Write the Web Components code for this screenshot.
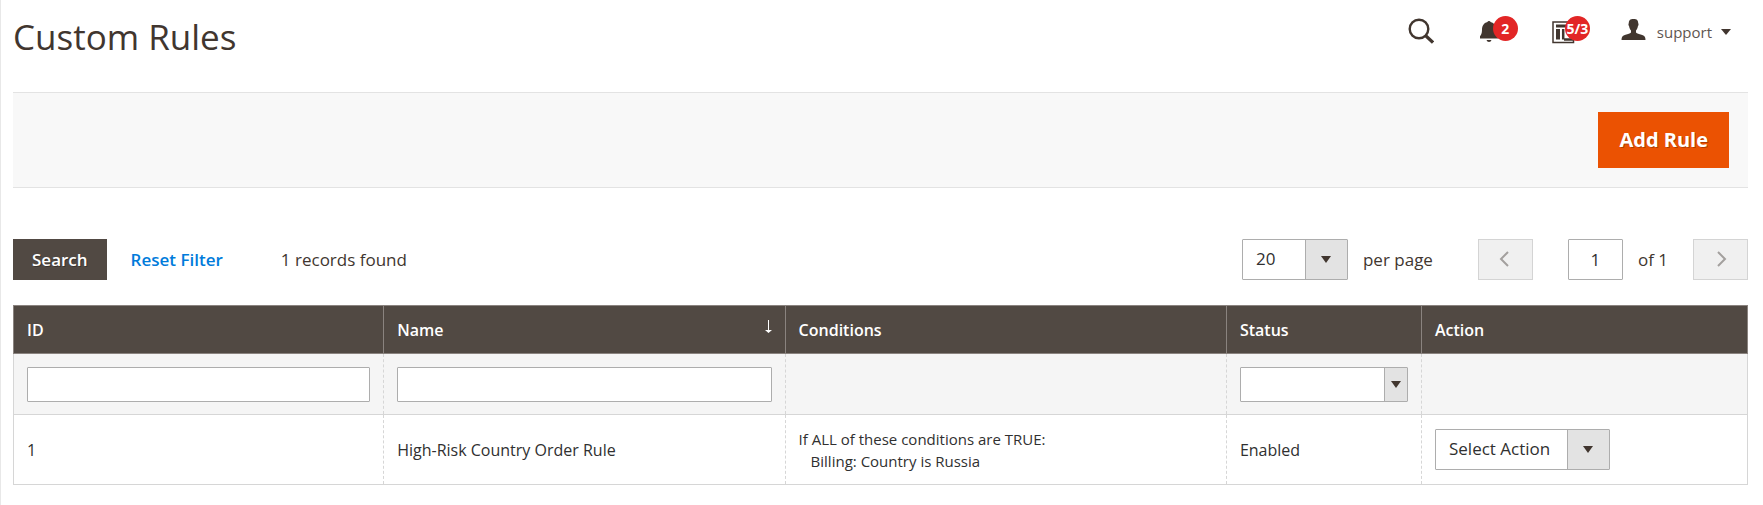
<!DOCTYPE html>
<html lang="en">
<head>
<meta charset="utf-8">
<title>Custom Rules</title>
<style>
  body { margin: 0; background: #fff; color: #41362f; font-family: "Open Sans", "Noto Sans", sans-serif; font-size: 16px; line-height: 22px; }
</style>
</head>
<body>
<rules-page></rules-page>

<script>
const define = (name, html, setup) => {
  const template = document.createElement('template');
  template.innerHTML = html;
  customElements.define(name, class extends HTMLElement {
    connectedCallback() {
      if (this.shadowRoot) return;
      this.attachShadow({ mode: 'open' }).append(template.content.cloneNode(true));
      if (setup) setup(this, this.shadowRoot);
    }
  });
};

/* Button: primary (orange), dark, link and pager looks */
define('ui-button', `
  <style>
    :host { display: block; }
    button { display: block; box-sizing: border-box; height: 41px; margin: 0; padding: 0 18px; border: 1px solid transparent; background: none; color: #007bdb; font: 600 17px/22px "Open Sans", sans-serif; cursor: pointer; white-space: nowrap; }
    :host([kind="primary"]) button { height: 56px; padding: 0 20px; border-color: #eb5202; background: #eb5202; color: #fff; font-size: 20px; font-weight: 700; text-shadow: 1px 1px 0 rgba(0,0,0,.25); }
    :host([kind="dark"]) button { border-color: #514943; background: #514943; color: #fff; text-shadow: 1px 1px 0 rgba(0,0,0,.3); }
    :host([kind="link"]) button { padding: 0 23px; }
    :host([kind="pager"]) button { width: 55px; padding: 0; border-color: #d4d4d4; background: #f0f0f0; color: #a3a09e; }
    ::slotted(svg) { display: block; margin: -2px auto 0; }
  </style>
  <button type="button"><slot></slot></button>`,
  (host, root) => {
    const button = root.querySelector('button');
    if (host.hasAttribute('label')) button.setAttribute('aria-label', host.getAttribute('label'));
    button.disabled = host.hasAttribute('disabled');
  });

/* Drop-down with a grey arrow box; slotted text is its visible label */
define('ui-select', `
  <style>
    :host { display: inline-block; vertical-align: middle; --height: 41px; --arrow: 42px; --width: 106px; }
    :host([kind="action"]) { --width: 175px; }
    :host([kind="filter"]) { --width: 100%; --height: 35px; --arrow: 23px; display: block; }
    label { display: flex; align-items: center; gap: 15px; }
    .box { display: grid; grid-template-columns: 1fr var(--arrow); box-sizing: border-box; width: var(--width); height: var(--height); border: 1px solid #adadad; border-radius: 1px; background: #fff; }
    select { grid-area: 1 / 1 / 2 / 3; appearance: none; width: 100%; height: 100%; margin: 0; padding: 0 0 1px 13px; border: 0; background: none; color: #303030; font: 17px/22px "Open Sans", sans-serif; }
    .arrow { grid-area: 1 / 2; display: flex; align-items: center; justify-content: center; box-sizing: border-box; border-left: 1px solid #adadad; background: #e3e3e3; pointer-events: none; }
  </style>
  <label>
    <span class="box"><span class="arrow"><svg width="10" height="7" viewBox="0 0 10 7"><path d="M0 0h10L5 7z" fill="#41362f"/></svg></span><select></select></span>
    <slot></slot>
  </label>`,
  (host, root) => {
    const select = root.querySelector('select');
    host.getAttribute('options').split('|').forEach(text => select.add(new Option(text)));
    if (host.hasAttribute('label')) select.setAttribute('aria-label', host.getAttribute('label'));
  });

/* Icon link with an optional red counter */
define('icon-action', `
  <style>
    :host { display: block; }
    a { display: block; position: relative; color: #41362f; text-decoration: none; }
    ::slotted(svg) { display: block; }
    .count { position: absolute; top: -2px; left: 13px; width: 25px; height: 25px; border-radius: 50%; background: #e22626; color: #fff; font: 700 14px/25px "Open Sans", sans-serif; text-align: center; }
    .count:empty { display: none; }
  </style>
  <a href="#"><slot></slot><span class="count"></span></a>`,
  (host, root) => {
    root.querySelector('a').setAttribute('aria-label', host.getAttribute('label'));
    root.querySelector('.count').textContent = host.getAttribute('count') || '';
  });

define('page-header', `
  <style>
    :host { display: flex; justify-content: space-between; align-items: flex-start; height: 92px; }
    h1 { margin: 0; padding-top: 13px; font-size: 35px; line-height: 48px; font-weight: 400; }
    nav { display: flex; padding: 18px 17px 0 0; }
    .user { display: flex; gap: 11px; color: #41362f; text-decoration: none; font-size: 15px; line-height: 26px; }
    .name { display: flex; align-items: center; gap: 9px; color: #5f5650; }
    icon-action { margin-right: 46px; }
    .news { margin-right: 43px; }
  </style>
  <h1>Custom Rules</h1>
  <nav aria-label="Account">
    <icon-action label="Search"><svg width="27" height="27" viewBox="0 0 27 27" fill="none" stroke="#41362f"><circle cx="12" cy="11" r="9.300" stroke-width="2.400"/><path d="M18.500 17.500l7.500 7" stroke-width="3.200"/></svg></icon-action>
    <icon-action label="Notifications" count="2"><svg width="26" height="26" viewBox="0 0 26 26" fill="#41362f"><path d="M7.500 4q0-1 1.500-1t1.500 1c4 1 5.500 4 5.500 8 0 4 2 5.500 2.500 7v1.500H-.5V19C.5 17.500 2 16 2 12c0-4 1.500-7 5.500-8zM6.500 22h5q-.5 2-2.500 2t-2.500-2z"/></svg></icon-action>
    <icon-action label="System news" count="5/3" class="news"><svg width="26" height="26" viewBox="0 0 26 26" fill="none" stroke="#41362f"><path d="M1 4h20.500v20.500H1z" stroke-width="1.500"/><path d="M4 8h16" stroke-width="3"/><path d="M6 11v10.500" stroke-width="4"/><path d="M11.200 11v10.500M12 21.500h9" stroke-width="2.500"/></svg></icon-action>
    <a class="user" href="#"><svg width="25" height="23" viewBox="0 0 25 23" fill="#41362f"><path d="M12.500 1c3.500 0 4.700 1.500 4.700 4.200.6.500.4 2-.3 3-.4 2-1 3.300-1.900 4.300v2c1 1.300 3 1.500 5.500 2.300 3 1 4 2.200 4 5.200H.5c0-3 1-4.200 4-5.200C7 16 9 15.800 10 14.500v-2C9.100 11.500 8.500 10.200 8.100 8.200c-.7-1-.9-2.500-.3-3C7.800 2.500 9 1 12.500 1z"/></svg><span class="name">support <svg width="10" height="6" viewBox="0 0 10 6"><path d="M0 0h10L5 6z" fill="#41362f"/></svg></span></a>
  </nav>`);

define('action-bar', `
  <style>
    :host { display: flex; justify-content: flex-end; padding: 19px; border: solid #e3e3e3; border-width: 1px 0; background: #f8f8f8; }
  </style>
  <slot></slot>`);

define('grid-toolbar', `
  <style>
    :host { display: flex; align-items: center; justify-content: space-between; font-size: 17px; }
    div { display: flex; align-items: center; }
    .found { margin-left: 34px; }
    .page { display: flex; align-items: center; gap: 15px; margin: 0 25px 0 35px; }
    input { box-sizing: border-box; width: 55px; height: 41px; margin: 0; padding: 0; border: 1px solid #adadad; border-radius: 1px; color: #303030; font: 17px/22px "Open Sans", sans-serif; text-align: center; }
    ui-select { margin-right: 45px; }
  </style>
  <div>
    <ui-button kind="dark">Search</ui-button>
    <ui-button kind="link">Reset Filter</ui-button>
    <span class="found">1 records found</span>
  </div>
  <div>
    <ui-select options="20|30|50|100|200">per page</ui-select>
    <ui-button kind="pager" label="Previous page" disabled><svg width="12" height="16" viewBox="0 0 12 16" fill="none" stroke="#a3a09e" stroke-width="2"><path d="M9 1L2 8l7 7"/></svg></ui-button>
    <label class="page"><input type="text" value="1"> of 1</label>
    <ui-button kind="pager" label="Next page" disabled><svg width="12" height="16" viewBox="0 0 12 16" fill="none" stroke="#a3a09e" stroke-width="2"><path d="M3 1l7 7-7 7"/></svg></ui-button>
  </div>`);

define('rules-grid', `
  <style>
    :host { display: block; }
    table { width: 100%; table-layout: fixed; border-collapse: collapse; }
    th, td { box-sizing: border-box; padding: 0 13px; text-align: left; }
    th { height: 48px; border: 1px solid #8a837f; background: #514943; color: #fff; font-weight: 600; }
    th > span { display: flex; justify-content: space-between; align-items: center; }
    td { border: 1px dashed #d6d6d6; border-bottom: 1px solid #d6d6d6; color: #303030; }
    td:first-child { border-left-style: solid; }
    td:last-child { border-right-style: solid; }
    .filters td { height: 61px; background: #f5f5f5; }
    .rule td { height: 70px; }
    .conditions { font-size: 15px; }
    .conditions div + div { padding-left: 12px; }
    input { display: block; box-sizing: border-box; width: 100%; height: 35px; padding: 0 10px; border: 1px solid #adadad; border-radius: 1px; font: 16px/22px "Open Sans", sans-serif; }
    .id { width: 21.35%; } .name { width: 23.15%; } .cond { width: 25.45%; } .status { width: 11.25%; }
  </style>
  <table>
    <colgroup><col class="id"><col class="name"><col class="cond"><col class="status"><col></colgroup>
    <thead>
      <tr><th>ID</th><th><span>Name <svg width="7" height="22" viewBox="0 0 7 22" fill="#fff"><path d="M3 1h1v10h3l-3.500 3L0 11h3z"/></svg></span></th><th>Conditions</th><th>Status</th><th>Action</th></tr>
    </thead>
    <tbody>
      <tr class="filters"><td><input type="text" aria-label="ID"></td><td><input type="text" aria-label="Name"></td><td></td><td><ui-select kind="filter" label="Status" options="|Enabled|Disabled"></ui-select></td><td></td></tr>
      <tr class="rule"><td>1</td><td>High-Risk Country Order Rule</td><td class="conditions"><div>If ALL of these conditions are TRUE:</div><div>Billing: Country is Russia</div></td><td>Enabled</td><td><ui-select kind="action" label="Action" options="Select Action|Edit|Delete"></ui-select></td></tr>
    </tbody>
  </table>`);

define('rules-page', `
  <style>
    :host { display: block; box-sizing: border-box; min-height: 100vh; padding: 0 15px 0 12px; border-left: 1px solid #e8e8e8; }
    grid-toolbar { margin: 51px 0 25px; }
  </style>
  <page-header></page-header>
  <main>
    <action-bar><ui-button kind="primary">Add Rule</ui-button></action-bar>
    <grid-toolbar></grid-toolbar>
    <rules-grid></rules-grid>
  </main>`);
</script>
</body>
</html>
